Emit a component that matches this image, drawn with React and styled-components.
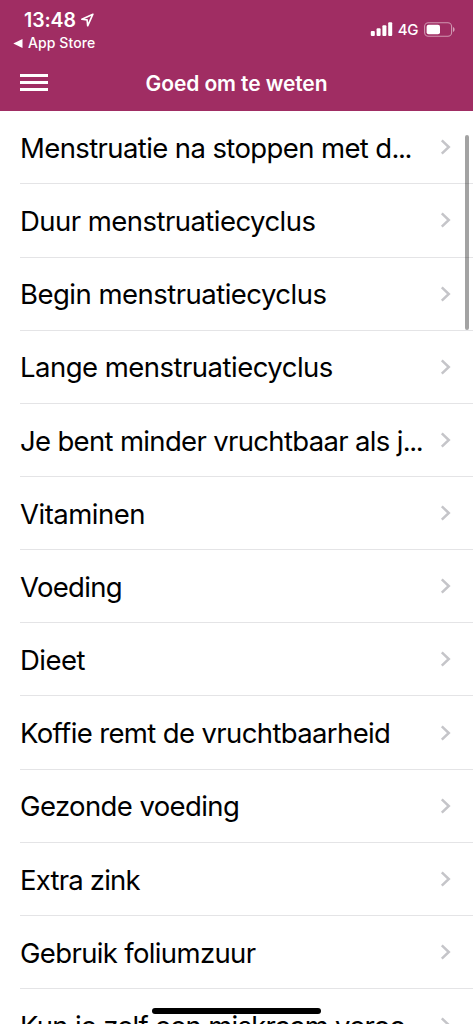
import React from 'react'
import styled, { createGlobalStyle } from 'styled-components'

const GlobalStyle = createGlobalStyle`
    * {
        box-sizing: border-box;
    }
    html, body {
        margin: 0;
        height: 100%;
        overflow: hidden;
        background: #fff;
    }
    body {
        font-family: Inter, "Liberation Sans", sans-serif;
        color: #000;
    }
`

const topics = [
    { title: 'Menstruatie na stoppen met d', spacing: -0.61, cut: true },
    { title: 'Duur menstruatiecyclus', spacing: -0.54 },
    { title: 'Begin menstruatiecyclus', spacing: -0.52 },
    { title: 'Lange menstruatiecyclus', spacing: -0.52 },
    { title: 'Je bent minder vruchtbaar als j', spacing: -0.67, cut: true },
    { title: 'Vitaminen', spacing: -0.5 },
    { title: 'Voeding', spacing: -0.67 },
    { title: 'Dieet', spacing: -0.54 },
    { title: 'Koffie remt de vruchtbaarheid', spacing: -0.63 },
    { title: 'Gezonde voeding', spacing: -0.61 },
    { title: 'Extra zink', spacing: -0.8 },
    { title: 'Gebruik foliumzuur', spacing: -0.65 },
    { title: 'Kun je zelf een miskraam veroo', spacing: -0.72, cut: true },
]

const Screen = styled.div`
    position: relative;
    display: flex;
    flex-direction: column;
    width: 473px;
    height: 1024px;
    overflow: hidden;
    background: #fff;
`

const Header = styled.header`
    flex: none;
    height: 111px;
    background: #a02d63;
    color: #fff;
`

const StatusBar = styled.div`
    display: flex;
    justify-content: space-between;
    height: 56px;
    padding: 9px 18px 0 13px;
`

const Clock = styled.div`
    display: flex;
    align-items: center;
    gap: 5px;
    height: 22px;
    padding-left: 11px;
    font-size: 19.5px;
    font-weight: 600;
    line-height: 22px;
    letter-spacing: -0.1px;
`

const BackLink = styled.div`
    display: flex;
    align-items: center;
    gap: 5px;
    height: 18px;
    margin-top: 3px;
    font-size: 14px;
    font-weight: 500;
    line-height: 18px;
    letter-spacing: 0.1px;
`

const Indicators = styled.div`
    display: flex;
    align-items: center;
    height: 16px;
    margin-top: 12px;
`

const Network = styled.span`
    margin: 1px 6px 0 5px;
    font-size: 15px;
    font-weight: 500;
    line-height: 16px;
    letter-spacing: -0.4px;
`

const NavBar = styled.div`
    display: grid;
    grid-template-columns: 60px 1fr 60px;
    align-items: center;
    height: 55px;
`

const MenuButton = styled.button`
    display: flex;
    flex-direction: column;
    gap: 4px;
    width: 28px;
    margin: 0 0 2px 20px;
    padding: 0;
    border: 0;
    background: none;
    span {
        height: 3px;
        background: #fff;
    }
`

const Title = styled.h1`
    margin: 0;
    font-size: 21px;
    font-weight: 600;
    line-height: 26px;
    letter-spacing: -0.1px;
    text-align: center;
    white-space: nowrap;
`

const List = styled.ul`
    flex: 1;
    margin: 0;
    padding: 0.2px 0 0 20px;
    list-style: none;
    overflow: hidden;
`

const Row = styled.li`
    display: flex;
    justify-content: space-between;
    align-items: center;
    height: 73.17px;
    padding-right: 22px;
    border-bottom: 1px solid #e4e4e6;
`

const Label = styled.span`
    padding-top: 1.4px;
    font-size: 27.5px;
    line-height: 34px;
    letter-spacing: ${props => props.$spacing}px;
    white-space: nowrap;
`

const Dots = styled.span`
    letter-spacing: -1.4px;
`

const ScrollThumb = styled.div`
    position: absolute;
    top: 135px;
    right: 4px;
    width: 4px;
    height: 195px;
    border-radius: 2px;
    background: rgba(0, 0, 0, 0.36);
`

const HomeIndicator = styled.div`
    position: absolute;
    left: 152px;
    bottom: 10px;
    width: 169px;
    height: 6px;
    border-radius: 3px;
    background: #000;
`

function LocationIcon() {
    return (
        <svg width="13" height="14" viewBox="0 0 13 14" fill="none">
            <path d="M11.9 1.2.9 6.3l5.200.600.600 5.900z" stroke="#fff" strokeWidth="1.600" strokeLinejoin="round" />
        </svg>
    )
}

function BackIcon() {
    return (
        <svg width="10" height="9" viewBox="0 0 10 9">
            <path d="M.3 4.5 9.5.1v8.8z" fill="#fff" />
        </svg>
    )
}

function SignalIcon() {
    return (
        <svg width="23" height="14" viewBox="0 0 23 14" fill="#fff">
            <rect x=".8" y="9" width="4" height="5" rx="1" />
            <rect x="6.6" y="6.3" width="4" height="7.7" rx="1" />
            <rect x="12.4" y="3.3" width="4" height="10.7" rx="1" />
            <rect x="18.2" y=".2" width="4" height="13.8" rx="1" />
        </svg>
    )
}

function BatteryIcon() {
    return (
        <svg width="31" height="15" viewBox="0 0 31 15">
            <rect x=".6" y=".8" width="27" height="13.4" rx="3.8" fill="none" stroke="#fff" strokeOpacity=".5" strokeWidth="1.1" />
            <rect x="2.6" y="2.7" width="13.4" height="9.6" rx="2" fill="#fff" />
            <path d="M29 5v5c1-.4 1.6-1.4 1.6-2.5S30 5.4 29 5z" fill="#fff" fillOpacity=".55" />
        </svg>
    )
}

function Chevron() {
    return (
        <svg width="11" height="16" viewBox="0 0 11 16" fill="none">
            <path d="M1.8 1.3 8.8 8l-7 6.7" stroke="#c5c5c9" strokeWidth="2.5" />
        </svg>
    )
}

function App() {
    return (
        <Screen>
            <GlobalStyle />
            <Header>
                <StatusBar>
                    <div>
                        <Clock>13:48 <LocationIcon /></Clock>
                        <BackLink><BackIcon /> App Store</BackLink>
                    </div>
                    <Indicators>
                        <SignalIcon />
                        <Network>4G</Network>
                        <BatteryIcon />
                    </Indicators>
                </StatusBar>
                <NavBar>
                    <MenuButton aria-label="Menu">
                        <span />
                        <span />
                        <span />
                    </MenuButton>
                    <Title>Goed om te weten</Title>
                </NavBar>
            </Header>
            <List>
                {topics.map(topic => (
                    <Row key={topic.title}>
                        <Label $spacing={topic.spacing}>
                            {topic.title}{topic.cut && <Dots>...</Dots>}
                        </Label>
                        <Chevron />
                    </Row>
                ))}
            </List>
            <ScrollThumb />
            <HomeIndicator />
        </Screen>
    )
}

export default App
